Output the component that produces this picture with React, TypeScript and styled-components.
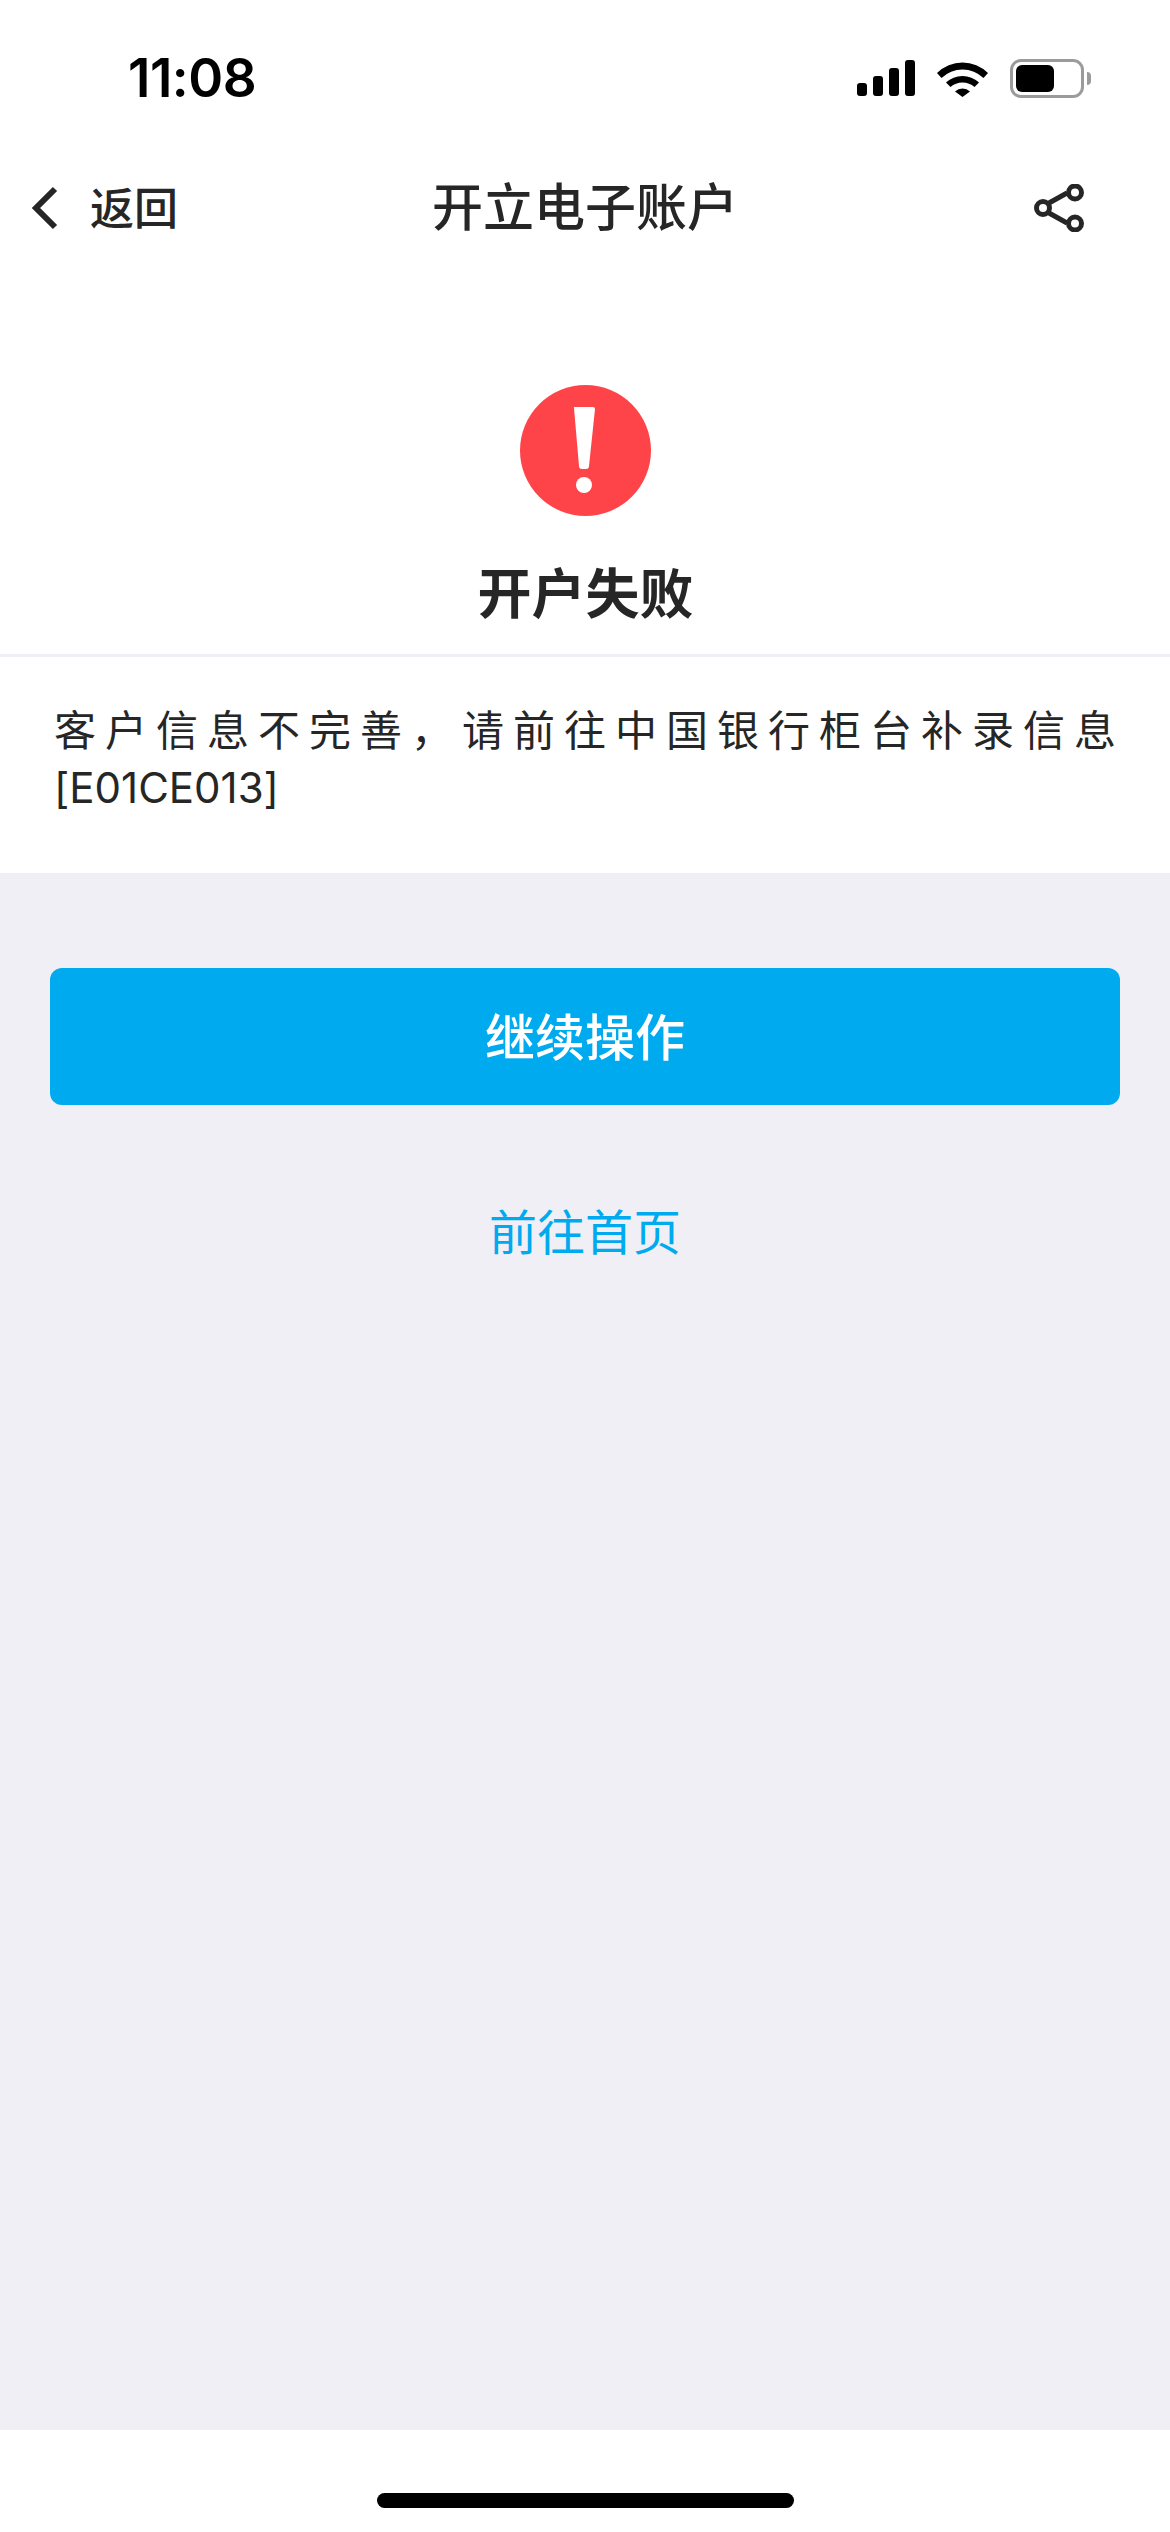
import React from "react";
import styled, { createGlobalStyle } from "styled-components";

const GlobalStyle = createGlobalStyle`
  html, body {
    margin: 0;
    padding: 0;
    background: #ffffff;
  }
  * {
    box-sizing: border-box;
  }
`;

const CJK = `"Inter", "Noto Sans CJK SC", sans-serif`;

export default function App() {
  return (
    <Page>
      <GlobalStyle />
      <StatusBar>
        <Time>11:08</Time>
        <StatusIcons>
          <svg width="58" height="36" viewBox="0 0 58 36">
            <rect x="0" y="23" width="10" height="13" rx="3" />
            <rect x="16" y="16" width="10" height="20" rx="3" />
            <rect x="32" y="8" width="10" height="28" rx="3" />
            <rect x="48" y="0" width="10" height="36" rx="3" />
          </svg>
          <svg width="51" height="37" viewBox="0 0 51 37">
            <path d="M0 13 A36 36 0 0 1 51 13 L46.5 18 A30 30 0 0 0 4.5 18 Z" />
            <path d="M9 22.5 A24 24 0 0 1 42 22.5 L37.5 27 A18 18 0 0 0 13.5 27 Z" />
            <path d="M18 31.5 A11 11 0 0 1 33 31.5 L25.5 37 Z" />
          </svg>
          <Battery>
            <BatteryFill />
          </Battery>
        </StatusIcons>
      </StatusBar>

      <NavBar>
        <BackButton>
          <svg width="26" height="44" viewBox="0 0 26 44">
            <path d="M23 3 L4 22 L23 41" fill="none" stroke="#262626" strokeWidth="6" />
          </svg>
          <BackLabel>返回</BackLabel>
        </BackButton>
        <NavTitle>开立电子账户</NavTitle>
        <ShareSlot>
          <svg width="50" height="48" viewBox="0 0 50 48">
            <g fill="none" stroke="#262626" strokeWidth="5">
              <path d="M15 19 L33 9 M15 29 L33 39" />
              <circle cx="9" cy="24" r="6.5" />
              <circle cx="41" cy="8.500" r="6.5" />
              <circle cx="41" cy="39.500" r="6.5" />
            </g>
          </svg>
        </ShareSlot>
      </NavBar>

      <ResultBlock>
        <svg width="131" height="131" viewBox="0 0 131 131">
          <circle cx="65.500" cy="65.500" r="65.500" fill="#ff4449" />
          <path d="M54 23 Q53 22 55 22 L73 22 Q75 22 75 24 L69 81 Q69 84 66 84 L62 84 Q59 84 59 81 Z" fill="#ffffff" />
          <circle cx="64" cy="100" r="8" fill="#ffffff" />
        </svg>
        <ResultTitle>开户失败</ResultTitle>
      </ResultBlock>

      <Message>客户信息不完善，请前往中国银行柜台补录信息[E01CE013]</Message>

      <Actions>
        <PrimaryButton>继续操作</PrimaryButton>
        <TextLink>前往首页</TextLink>
      </Actions>

      <HomeArea>
        <HomeBar />
      </HomeArea>
    </Page>
  );
}

const Page = styled.div`
  width: 1170px;
  height: 2532px;
  display: flex;
  flex-direction: column;
  background: #ffffff;
  font-family: ${CJK};
  color: #262626;
`;

const StatusBar = styled.div`
  height: 156px;
  flex: none;
  display: flex;
  align-items: center;
  justify-content: space-between;
  padding: 0 79px 0 128px;
`;

const Time = styled.div`
  font-size: 53px;
  font-weight: 600;
  line-height: 1;
  color: #000000;
  letter-spacing: -0.5px;
`;

const StatusIcons = styled.div`
  display: flex;
  align-items: center;
  gap: 22px;
  fill: #000000;
`;

const Battery = styled.div`
  position: relative;
  width: 74px;
  height: 39px;
  border: 3px solid #9b9b9b;
  border-radius: 11px;
  padding: 3px;
  margin-right: 7px;

  &::after {
    content: "";
    position: absolute;
    right: -10px;
    top: 10px;
    width: 4px;
    height: 13px;
    background: #9b9b9b;
    border-radius: 0 4px 4px 0;
  }
`;

const BatteryFill = styled.div`
  width: 38px;
  height: 27px;
  background: #000000;
  border-radius: 6px;
`;

const NavBar = styled.div`
  height: 104px;
  flex: none;
  display: grid;
  grid-template-columns: 1fr auto 1fr;
  align-items: center;
  padding: 0 32px;
`;

const BackButton = styled.div`
  display: flex;
  align-items: center;
  gap: 32px;
`;

const BackLabel = styled.span`
  font-size: 44px;
  font-weight: 500;
  padding-bottom: 4px;
`;

const NavTitle = styled.div`
  font-size: 51px;
  font-weight: 500;
  padding-bottom: 8px;
`;

const ShareSlot = styled.div`
  display: flex;
  justify-content: flex-end;
  padding-right: 54px;
`;

const ResultBlock = styled.div`
  height: 397px;
  flex: none;
  display: flex;
  flex-direction: column;
  align-items: center;
  padding-top: 125px;
  border-bottom: 3px solid #efeff5;
`;

const ResultTitle = styled.div`
  margin-top: 45px;
  font-size: 54px;
  line-height: 68px;
  font-weight: 700;
  padding-left: 1px;
`;

const Message = styled.div`
  height: 216px;
  flex: none;
  padding: 45px 54px 0 54px;
  font-size: 42px;
  line-height: 57px;
  text-align: justify;
  font-weight: 400;
`;

const Actions = styled.div`
  flex: 1;
  display: flex;
  flex-direction: column;
  align-items: center;
  padding: 95px 50px 0;
  background: #efeff5;
`;

const PrimaryButton = styled.div`
  width: 100%;
  height: 137px;
  display: flex;
  align-items: center;
  justify-content: center;
  padding-bottom: 5px;
  background: #00aaef;
  border-radius: 12px;
  color: #ffffff;
  font-size: 50px;
  font-weight: 500;
`;

const TextLink = styled.div`
  margin-top: 93px;
  font-size: 48px;
  line-height: 70px;
  color: #00aaef;
`;

const HomeArea = styled.div`
  height: 102px;
  flex: none;
  display: flex;
  justify-content: center;
  padding-top: 63px;
`;

const HomeBar = styled.div`
  width: 417px;
  height: 15px;
  background: #000000;
  border-radius: 8px;
`;
